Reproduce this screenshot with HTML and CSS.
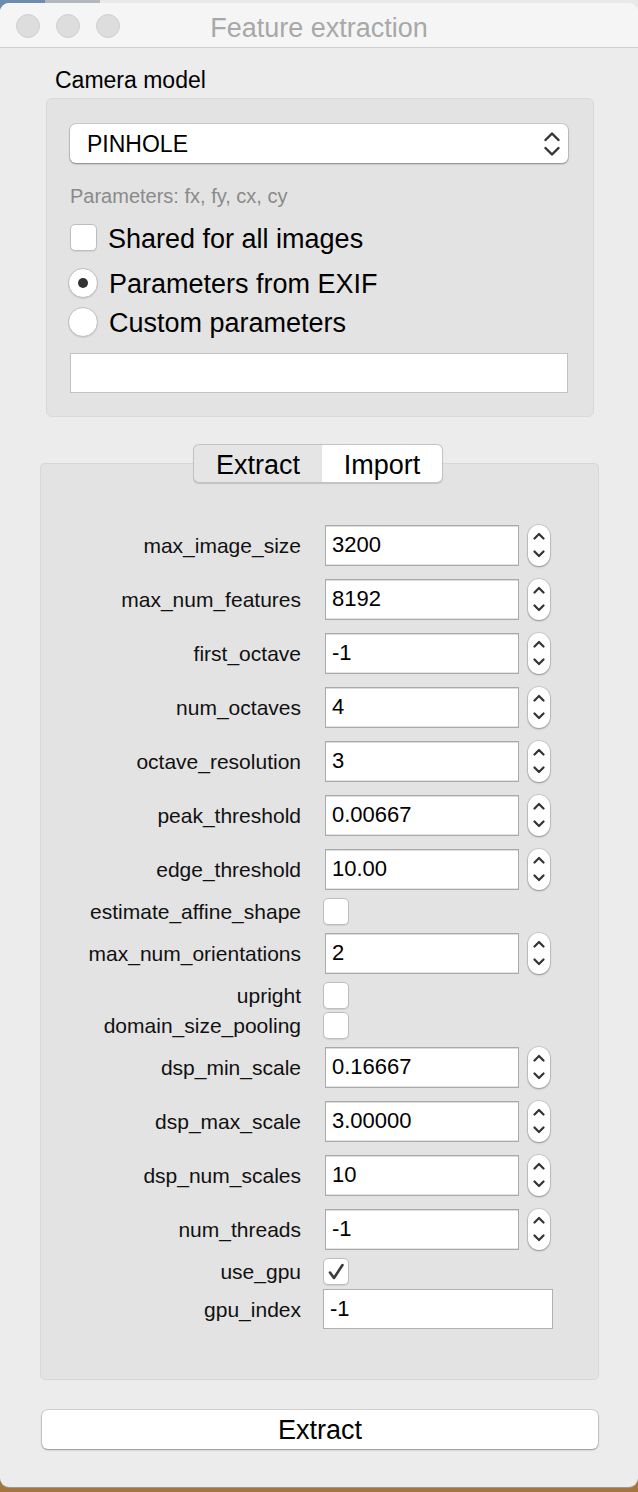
FILE: index.html
```html
<!DOCTYPE html>
<html>
<head>
<meta charset="utf-8">
<title>Feature extraction</title>
<link rel="stylesheet" href="styles.css">
</head>
<body>
<div class="window">
  <div class="titlebar">
    <div class="lights"><span class="light"></span><span class="light"></span><span class="light"></span></div>
    <div class="title">Feature extraction</div>
    <div></div>
  </div>
  <div class="cam-label">Camera model</div>
  <div class="group">
    <div class="combo">
      <span>PINHOLE</span>
      <svg class="combo-arrows" width="16" height="26" viewBox="0 0 16 26"><path d="M1.5 9 L8 2.5 L14.5 9 M1.5 17 L8 23.5 L14.5 17" fill="none" stroke="#333" stroke-width="2.4" stroke-linecap="round" stroke-linejoin="round"/></svg>
    </div>
    <div class="hint">Parameters: fx, fy, cx, cy</div>
    <div class="check-line"><span class="box big"></span><span>Shared for all images</span></div>
    <div class="radio-line first"><span class="radio on"></span><span>Parameters from EXIF</span></div>
    <div class="radio-line"><span class="radio"></span><span>Custom parameters</span></div>
    <div class="textfield"></div>
  </div>

  <div class="tabbar">
    <div class="tab sel">Extract</div>
    <div class="tab">Import</div>
  </div>
  <div class="pane">
    <div class="row spin"><div class="lbl">max_image_size</div><div class="spinbox">3200</div><div class="stepper"><svg width="12" height="28" viewBox="0 0 12 28"><path d="M1.5 7.5 L6 3 L10.5 7.5 M1.5 20.5 L6 25 L10.5 20.5" fill="none" stroke="#333" stroke-width="2.2" stroke-linecap="round" stroke-linejoin="round"/></svg></div></div>
    <div class="row spin"><div class="lbl">max_num_features</div><div class="spinbox">8192</div><div class="stepper"><svg width="12" height="28" viewBox="0 0 12 28"><path d="M1.5 7.5 L6 3 L10.5 7.5 M1.5 20.5 L6 25 L10.5 20.5" fill="none" stroke="#333" stroke-width="2.2" stroke-linecap="round" stroke-linejoin="round"/></svg></div></div>
    <div class="row spin"><div class="lbl">first_octave</div><div class="spinbox">-1</div><div class="stepper"><svg width="12" height="28" viewBox="0 0 12 28"><path d="M1.5 7.5 L6 3 L10.5 7.5 M1.5 20.5 L6 25 L10.5 20.5" fill="none" stroke="#333" stroke-width="2.2" stroke-linecap="round" stroke-linejoin="round"/></svg></div></div>
    <div class="row spin"><div class="lbl">num_octaves</div><div class="spinbox">4</div><div class="stepper"><svg width="12" height="28" viewBox="0 0 12 28"><path d="M1.5 7.5 L6 3 L10.5 7.5 M1.5 20.5 L6 25 L10.5 20.5" fill="none" stroke="#333" stroke-width="2.2" stroke-linecap="round" stroke-linejoin="round"/></svg></div></div>
    <div class="row spin"><div class="lbl">octave_resolution</div><div class="spinbox">3</div><div class="stepper"><svg width="12" height="28" viewBox="0 0 12 28"><path d="M1.5 7.5 L6 3 L10.5 7.5 M1.5 20.5 L6 25 L10.5 20.5" fill="none" stroke="#333" stroke-width="2.2" stroke-linecap="round" stroke-linejoin="round"/></svg></div></div>
    <div class="row spin"><div class="lbl">peak_threshold</div><div class="spinbox">0.00667</div><div class="stepper"><svg width="12" height="28" viewBox="0 0 12 28"><path d="M1.5 7.5 L6 3 L10.5 7.5 M1.5 20.5 L6 25 L10.5 20.5" fill="none" stroke="#333" stroke-width="2.2" stroke-linecap="round" stroke-linejoin="round"/></svg></div></div>
    <div class="row spin"><div class="lbl">edge_threshold</div><div class="spinbox">10.00</div><div class="stepper"><svg width="12" height="28" viewBox="0 0 12 28"><path d="M1.5 7.5 L6 3 L10.5 7.5 M1.5 20.5 L6 25 L10.5 20.5" fill="none" stroke="#333" stroke-width="2.2" stroke-linecap="round" stroke-linejoin="round"/></svg></div></div>
    <div class="row chk"><div class="lbl">estimate_affine_shape</div><span class="box"></span></div>
    <div class="row spin"><div class="lbl">max_num_orientations</div><div class="spinbox">2</div><div class="stepper"><svg width="12" height="28" viewBox="0 0 12 28"><path d="M1.5 7.5 L6 3 L10.5 7.5 M1.5 20.5 L6 25 L10.5 20.5" fill="none" stroke="#333" stroke-width="2.2" stroke-linecap="round" stroke-linejoin="round"/></svg></div></div>
    <div class="row chk"><div class="lbl">upright</div><span class="box"></span></div>
    <div class="row chk"><div class="lbl">domain_size_pooling</div><span class="box"></span></div>
    <div class="row spin"><div class="lbl">dsp_min_scale</div><div class="spinbox">0.16667</div><div class="stepper"><svg width="12" height="28" viewBox="0 0 12 28"><path d="M1.5 7.5 L6 3 L10.5 7.5 M1.5 20.5 L6 25 L10.5 20.5" fill="none" stroke="#333" stroke-width="2.2" stroke-linecap="round" stroke-linejoin="round"/></svg></div></div>
    <div class="row spin"><div class="lbl">dsp_max_scale</div><div class="spinbox">3.00000</div><div class="stepper"><svg width="12" height="28" viewBox="0 0 12 28"><path d="M1.5 7.5 L6 3 L10.5 7.5 M1.5 20.5 L6 25 L10.5 20.5" fill="none" stroke="#333" stroke-width="2.2" stroke-linecap="round" stroke-linejoin="round"/></svg></div></div>
    <div class="row spin"><div class="lbl">dsp_num_scales</div><div class="spinbox">10</div><div class="stepper"><svg width="12" height="28" viewBox="0 0 12 28"><path d="M1.5 7.5 L6 3 L10.5 7.5 M1.5 20.5 L6 25 L10.5 20.5" fill="none" stroke="#333" stroke-width="2.2" stroke-linecap="round" stroke-linejoin="round"/></svg></div></div>
    <div class="row spin"><div class="lbl">num_threads</div><div class="spinbox">-1</div><div class="stepper"><svg width="12" height="28" viewBox="0 0 12 28"><path d="M1.5 7.5 L6 3 L10.5 7.5 M1.5 20.5 L6 25 L10.5 20.5" fill="none" stroke="#333" stroke-width="2.2" stroke-linecap="round" stroke-linejoin="round"/></svg></div></div>
    <div class="row chk"><div class="lbl">use_gpu</div><span class="box"><svg width="24" height="25" viewBox="0 0 24 25"><path d="M6 13.5 L10 19 L18.5 6" fill="none" stroke="#3a3a3a" stroke-width="2.6" stroke-linecap="round" stroke-linejoin="round"/></svg></span></div>
    <div class="row gpu"><div class="lbl">gpu_index</div><div class="linefield">-1</div></div>
  </div>

  <div class="button">Extract</div>
</div>
</body>
</html>
```

FILE: styles.css
```css
html, body {
  margin: 0;
  padding: 0;
}
body {
  width: 638px;
  height: 1492px;
  overflow: hidden;
  font-family: "Liberation Sans", Arial, Helvetica, sans-serif;
  color: #000;
  background:
    linear-gradient(to right, #6f8cae 0 45px, #b3b8be 45px 100px, #e9e9e9 100px) top left / 100% 24px no-repeat,
    #a6743f;
}
.window {
  margin-top: 3px;
  height: 1484px;
  background: #ececec;
  border-radius: 9px;
  overflow: hidden;
  display: flex;
  flex-direction: column;
  box-shadow: 0 1px 0 #9a9a9a;
}
.titlebar {
  height: 44px;
  flex: none;
  background: #f5f5f5;
  border-bottom: 1px solid #cfcfcf;
  display: grid;
  grid-template-columns: 1fr auto 1fr;
  align-items: center;
}
.lights {
  display: flex;
  gap: 16px;
  padding-left: 16px;
  margin-top: 1px;
}
.light {
  width: 22px;
  height: 22px;
  border-radius: 50%;
  background: #dddddd;
  border: 1px solid #d0d0d0;
}
.title {
  font-size: 27px;
  color: #a8a8a8;
  line-height: 30px;
  margin-top: 5px;
}
.cam-label {
  font-size: 23px;
  line-height: 26px;
  margin: 19px 0 5px 55px;
}
.group {
  margin: 0 44px 0 46px;
  background: #e3e3e3;
  border: 1px solid #d9d9d9;
  border-radius: 6px;
  padding: 25px 25px 23px 23px;
  display: flex;
  flex-direction: column;
}
.combo {
  height: 39px;
  background: #fff;
  border-radius: 6px;
  box-shadow: 0 0 0 1px rgba(0,0,0,0.10), 0 1px 2px rgba(0,0,0,0.35);
  display: flex;
  align-items: center;
  justify-content: space-between;
  padding: 0 8px 0 17px;
  font-size: 23px;
}
.combo span {
  margin-top: 2px;
}
.combo-arrows {
  display: block;
}
.hint {
  margin-top: 21px;
  font-size: 20px;
  line-height: 24px;
  color: #8a8a8a;
}
.check-line, .radio-line {
  display: flex;
  align-items: center;
  font-size: 27px;
}
.check-line {
  margin-top: 16px;
  height: 27px;
  gap: 11px;
}
.check-line span:last-child,
.radio-line span:last-child {
  margin-top: 3px;
}
.radio-line {
  height: 30px;
  gap: 11px;
  margin-top: 9px;
  margin-left: -2px;
}
.radio-line.first {
  margin-top: 17px;
}
.box {
  width: 24px;
  height: 25px;
  background: #fff;
  border: 1px solid #bdbdbd;
  border-radius: 5px;
  box-shadow: 0 1px 1px rgba(0,0,0,0.08);
  flex: none;
  display: flex;
  align-items: center;
  justify-content: center;
}
.box.big {
  width: 25px;
  height: 25px;
}
.radio {
  width: 30px;
  height: 30px;
  border-radius: 50%;
  background: #fff;
  border: 1px solid #bdbdbd;
  box-shadow: 0 1px 1px rgba(0,0,0,0.1);
  flex: none;
  box-sizing: border-box;
  display: flex;
  align-items: center;
  justify-content: center;
}
.radio.on::after {
  content: "";
  width: 10px;
  height: 10px;
  border-radius: 50%;
  background: #333;
}
.textfield {
  margin-top: 16px;
  height: 38px;
  background: #fff;
  border: 1px solid #c2c2c2;
}
.tabbar {
  margin-top: 27px;
  display: flex;
  justify-content: center;
  position: relative;
  z-index: 1;
  padding-right: 2px;
}
.tab {
  height: 37px;
  display: flex;
  align-items: center;
  justify-content: center;
  font-size: 27px;
  background: #fff;
  border: 1px solid #c3c3c3;
  box-shadow: 0 1px 1px rgba(0,0,0,0.15);
  width: 120px;
  border-left: none;
  border-radius: 0 6px 6px 0;
  padding-top: 3px;
  box-sizing: content-box;
  height: 34px;
}
.tab.sel {
  width: 128px;
  background: #e5e5e5;
  border-left: 1px solid #c3c3c3;
  border-right: none;
  border-radius: 6px 0 0 6px;
  padding-right: 0;
}
.pane {
  margin: -20px 39px 0 40px;
  background: #e3e3e3;
  border: 1px solid #d7d7d7;
  border-radius: 5px;
  padding: 54px 0 47px 0;
  display: flex;
  flex-direction: column;
}
.row {
  display: flex;
  align-items: center;
}
.row.spin { height: 54px; }
.row.chk { height: 30px; }
.row.gpu { height: 46px; }
.lbl {
  width: 260px;
  text-align: right;
  font-size: 21px;
  line-height: 24px;
  margin-right: 22px;
  color: #111;
  margin-top: 2px;
}
.spinbox {
  width: 186px;
  height: 39px;
  margin-left: 2px;
  background: #fff;
  border: 1px solid #aaaaaa;
  box-shadow: inset 0 1px 0 #dcdcdc, inset 0 -1px 0 #e4e4e4;
  font-size: 22px;
  display: flex;
  align-items: center;
  padding-left: 6px;
}
.stepper {
  width: 22px;
  height: 41px;
  margin-left: 9px;
  background: #fff;
  border-radius: 11px;
  box-shadow: 0 0 0 1px rgba(0,0,0,0.10), 0 1px 2px rgba(0,0,0,0.3);
  display: flex;
  align-items: center;
  justify-content: center;
}
.stepper svg { display: block; }
.linefield {
  width: 222px;
  height: 38px;
  background: #fff;
  border: 1px solid #b0b0b0;
  font-size: 22px;
  display: flex;
  align-items: center;
  padding-left: 6px;
}
.button {
  margin: 30px 40px 0 42px;
  height: 39px;
  background: #fff;
  border-radius: 6px;
  box-shadow: 0 0 0 1px rgba(0,0,0,0.10), 0 1px 2px rgba(0,0,0,0.3);
  display: flex;
  align-items: center;
  justify-content: center;
  font-size: 27px;
  padding-top: 2px;
  box-sizing: border-box;
}
```
